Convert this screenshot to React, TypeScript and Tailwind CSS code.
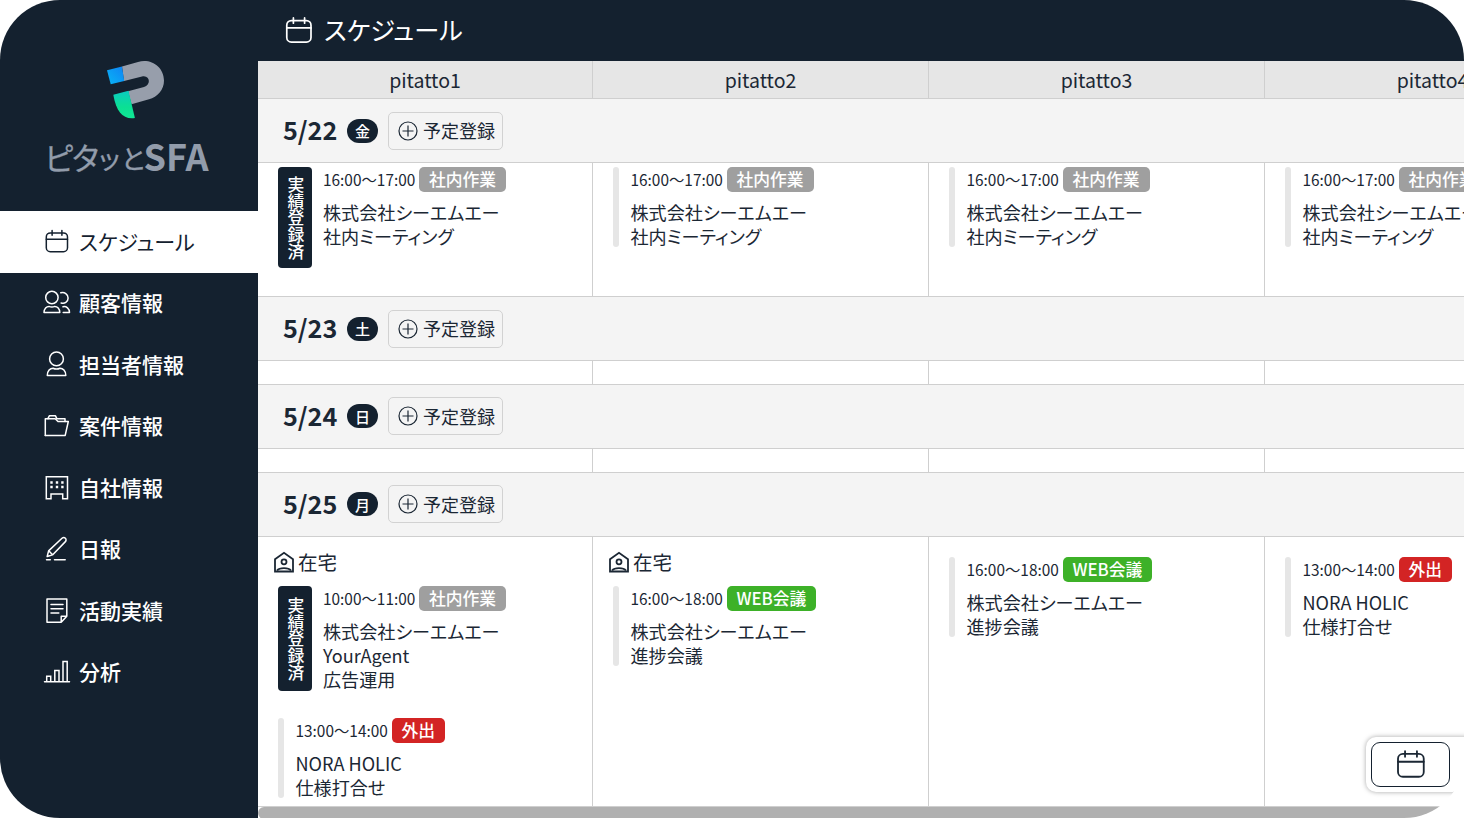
import type { ReactNode } from "react"

type Tone = "gray" | "green" | "red"

type ScheduleEvent = {
  time: string
  label: string
  tone: Tone
  lines: string[]
  done?: boolean
}

type Cell = { home?: boolean; offset?: boolean; events: ScheduleEvent[] }

type Day = { date: string; weekday: string; height: string; cells: Cell[] }

const TONES: Record<Tone, string> = {
  gray: "bg-[#9f9f9f]",
  green: "bg-[#3db128]",
  red: "bg-[#d32424]",
}

const MEMBERS = ["pitatto1", "pitatto2", "pitatto3", "pitatto4"]

const MEETING: ScheduleEvent = {
  time: "16:00〜17:00",
  label: "社内作業",
  tone: "gray",
  lines: ["株式会社シーエムエー", "社内ミーティング"],
}

const WEB_MEETING: ScheduleEvent = {
  time: "16:00〜18:00",
  label: "WEB会議",
  tone: "green",
  lines: ["株式会社シーエムエー", "進捗会議"],
}

const VISIT: ScheduleEvent = {
  time: "13:00〜14:00",
  label: "外出",
  tone: "red",
  lines: ["NORA HOLIC", "仕様打合せ"],
}

const EMPTY: Cell[] = [{ events: [] }, { events: [] }, { events: [] }, { events: [] }]

const DAYS: Day[] = [
  {
    date: "5/22",
    weekday: "金",
    height: "h-[134px]",
    cells: [
      { events: [{ ...MEETING, done: true }] },
      { events: [MEETING] },
      { events: [MEETING] },
      { events: [MEETING] },
    ],
  },
  { date: "5/23", weekday: "土", height: "h-[23.5px]", cells: EMPTY },
  { date: "5/24", weekday: "日", height: "h-6", cells: EMPTY },
  {
    date: "5/25",
    weekday: "月",
    height: "h-[270.5px]",
    cells: [
      {
        home: true,
        events: [
          {
            time: "10:00〜11:00",
            label: "社内作業",
            tone: "gray",
            lines: ["株式会社シーエムエー", "YourAgent", "広告運用"],
            done: true,
          },
          VISIT,
        ],
      },
      { home: true, events: [WEB_MEETING] },
      { offset: true, events: [WEB_MEETING] },
      { offset: true, events: [VISIT] },
    ],
  },
]

function Icon({ children, className = "size-7" }: { children: ReactNode; className?: string }) {
  return (
    <svg
      viewBox="0 0 28 28"
      fill="none"
      stroke="currentColor"
      strokeWidth="1.5"
      strokeLinecap="round"
      strokeLinejoin="round"
      className={`shrink-0 ${className}`}
    >
      {children}
    </svg>
  )
}

function CalendarIcon({ className }: { className?: string }) {
  return (
    <Icon className={className}>
      <rect x="3.3" y="4.9" width="21.2" height="18.800" rx="4" />
      <path d="M3.3 11.3h21.2M9.1 2.6v4.6M18.9 2.6v4.6" />
    </Icon>
  )
}

const NAV = [
  { label: "スケジュール", icon: <CalendarIcon /> },
  {
    label: "顧客情報",
    icon: (
      <Icon>
        <circle cx="8.9" cy="8.5" r="6.2" />
        <path d="M1 23.6c0-4 2.6-6.2 5-6.2 1.9.8 3.9.8 5.8 0 2.4 0 5 2.2 5 6.2z" />
        <path d="M17.8 3.8c3.6-1 7.300 1.200 7.300 5.200 0 4.100-3.600 6.200-7 5M20 17.700c3.300-.8 6.500 1.900 6.500 5.900h-6.300" />
      </Icon>
    ),
  },
  {
    label: "担当者情報",
    icon: (
      <Icon>
        <circle cx="13.5" cy="7.9" r="6.9" />
        <path d="M4.3 24.4c0-4.6 2.9-7.2 5.7-7.2 2.2 1 4.8 1 7 0 2.8 0 5.8 2.6 5.8 7.2z" />
      </Icon>
    ),
  },
  {
    label: "案件情報",
    icon: (
      <Icon>
        <path d="M2.3 23.4V6.8h2.5l1.5-3h6.2l1.5 3h8v2.7" />
        <path d="M2.3 23.4h19.9l3.1-13.9H15l-2.8-2.7H5" />
      </Icon>
    ),
  },
  {
    label: "自社情報",
    icon: (
      <Icon>
        <path d="M3.3 2.7h21.2v22h-4.8V20H8v4.7H3.3z" strokeLinejoin="miter" />
        <path
          d="M7.3 8.5h2.4M12.8 8.5h2.4M18.2 8.5h2.4M7.3 13h2.4M12.8 13h2.4M18.2 13h2.4"
          strokeWidth="2.3"
          strokeLinecap="butt"
        />
      </Icon>
    ),
  },
  {
    label: "日報",
    icon: (
      <Icon>
        <path d="M4.2 21.5l1.4-5.6L19 3.3c1-.9 2.5-.9 3.4 0s.9 2.4 0 3.3L9.5 19.9zM6 16l3.3 3.5" />
        <path d="M3.5 24.7h3.8M11.5 24.7h10.700" />
      </Icon>
    ),
  },
  {
    label: "活動実績",
    icon: (
      <Icon>
        <path d="M4 2h19.8v17.3l-5.6 6H4zM18.2 25.3v-6h5.6" />
        <path d="M8 7.5h12M8 11.7h12M8 16h7.8" />
      </Icon>
    ),
  },
  {
    label: "分析",
    icon: (
      <Icon>
        <path
          d="M1.5 23.8h25M3.7 23.8v-5.6h4v5.6M11.8 23.8V12.5h4.2v11.3M20 23.8V3.5h4.2v20.3"
          strokeLinejoin="miter"
        />
      </Icon>
    ),
  },
]

function Logo() {
  return (
    <svg viewBox="0 0 258 211" className="h-[211px] w-[258px] shrink-0">
      <defs>
        <linearGradient id="blue" x1="0" y1="1" x2="1" y2="0">
          <stop offset="0" stopColor="#08b5f4" />
          <stop offset="1" stopColor="#0f83f5" />
        </linearGradient>
        <linearGradient id="green" x1="0" y1="0" x2="0" y2="1">
          <stop offset="0" stopColor="#0bcbc0" />
          <stop offset="0.6" stopColor="#0be093" />
          <stop offset="1" stopColor="#10e795" />
        </linearGradient>
      </defs>
      <path
        d="M122 66.5L138 61.900C151 58 164 67 164 80.5C164 90 157.5 97 149 99.3L131.5 104.2L128 91.3L144 87C151.500 85 150 74.500 142 76.500L124 81z"
        fill="#979eab"
      />
      <path d="M107 70.3L122 66.6L124.2 80.9L110.7 84.3z" fill="url(#blue)" />
      <path d="M113.3 94.7L128.5 90.8L134.9 118C123 119.5 116.500 112.500 113.300 94.700z" fill="url(#green)" />
      <g fill="#929cab">
        <text x="44.5 72" y="170" fontSize="31" stroke="#929cab" strokeWidth="0.3">
          ピタ
        </text>
        <text x="99 121.5" y="169" fontSize="26" stroke="#929cab" strokeWidth="0.4">
          ッと
        </text>
        <text x="143.5" y="171" fontSize="37" fontWeight="700" textLength="65" lengthAdjust="spacingAndGlyphs">
          SFA
        </text>
      </g>
    </svg>
  )
}

function Sidebar() {
  return (
    <aside className="flex w-[258px] shrink-0 flex-col bg-[#14212f] text-white">
      <Logo />
      <nav className="flex flex-col">
        {NAV.map((item, i) => (
          <a
            key={item.label}
            className={`flex h-[61.5px] items-center gap-2 pl-[43px] text-[21px] leading-none ${
              i === 0 ? "bg-white text-[#14212f]" : "font-medium"
            }`}
          >
            {item.icon}
            <span className="pb-px">{item.label}</span>
          </a>
        ))}
      </nav>
    </aside>
  )
}

function EventCard({ event }: { event: ScheduleEvent }) {
  return (
    <div className={`flex ${event.done ? "gap-[11px]" : "gap-3"}`}>
      {event.done ? (
        <div className="flex w-[34px] items-center justify-center rounded bg-[#14212f] pl-px text-[16.8px] font-medium leading-none text-white [writing-mode:vertical-rl]">
          実績登録済
        </div>
      ) : (
        <div className="w-[5.5px] rounded-sm bg-[#e6e6e6]" />
      )}
      <div className={event.done ? (event.lines.length > 2 ? "h-[105px]" : "h-[101px]") : "h-[80px]"}>
        <div className="flex h-[25px] items-center gap-1">
          <span className="w-[92px] whitespace-nowrap text-[15.4px] leading-none">{event.time}</span>
          <span
            className={`flex h-[25px] items-center rounded-[5px] px-2.5 text-[16.8px] font-medium leading-none text-white ${TONES[event.tone]}`}
          >
            {event.label}
          </span>
        </div>
        <div className="mt-2 text-[18.1px] leading-6">
          {event.lines.map((line) => (
            <p key={line}>{line}</p>
          ))}
        </div>
      </div>
    </div>
  )
}

function HomeLabel() {
  return (
    <div className="-ml-[5px] flex h-[49.5px] items-center gap-[3px] pt-px text-[19.5px] leading-none">
      <svg viewBox="0 0 22 22" fill="none" stroke="currentColor" strokeWidth="1.8" className="size-[22px]">
        <path d="M2 20.5V8.3L11 1.8l9 6.5v12.2z" />
        <circle cx="11" cy="10.8" r="2.5" />
        <path d="M4 19.500c2.500-3.200 11.500-3.200 14 0" />
      </svg>
      <span>在宅</span>
    </div>
  )
}

function DayHeader({ day }: { day: Day }) {
  return (
    <div className="flex h-16 items-center border-b border-[#cfcfcf] bg-[#f4f4f4] pl-[25px]">
      <span className="w-[55px] pb-px text-[25.2px] font-bold leading-none">{day.date}</span>
      <span className="ml-[9px] flex h-6 w-[31px] items-center justify-center rounded-full bg-[#14212f] text-[15px] font-medium leading-none text-white">
        {day.weekday}
      </span>
      <button className="ml-[10px] flex h-[38px] w-[115px] items-center gap-[5px] rounded-[5px] border border-[#d2d2d2] pl-[9px] text-[18px] leading-none">
        <svg viewBox="0 0 20 20" fill="none" stroke="currentColor" strokeWidth="1.2" className="size-5 shrink-0">
          <circle cx="10" cy="10" r="9" />
          <path d="M10 4.5v11M4.5 10h11" />
        </svg>
        <span className="whitespace-nowrap pb-px">予定登録</span>
      </button>
    </div>
  )
}

export default function App() {
  return (
    <div className="h-[819px] w-[1464px] overflow-hidden bg-white font-['Noto_Sans_CJK_JP',sans-serif] text-[#1b2734] [font-feature-settings:'palt']">
      <div className="relative flex h-[818px] overflow-hidden rounded-[60px]">
        <Sidebar />

        <main className="flex min-w-0 flex-1 flex-col overflow-hidden">
          <header className="flex h-[61px] shrink-0 items-center gap-2.5 bg-[#14212f] pl-[25px] text-[25.2px] leading-none text-white">
            <CalendarIcon className="size-8" />
            <h1 className="-ml-px pb-0.5">スケジュール</h1>
          </header>

          <div className="flex h-[38px] w-[1343px] shrink-0 border-b border-[#cfcfcf] bg-[#e6e6e6]">
            {MEMBERS.map((name) => (
              <div
                key={name}
                className="flex w-[336px] items-center justify-center border-r border-[#cfcfcf] text-[19.5px] leading-none first:w-[335px]"
              >
                {name}
              </div>
            ))}
          </div>

          {DAYS.map((day) => (
            <section key={day.date} className="w-[1343px] shrink-0">
              <DayHeader day={day} />
              <div className={`flex border-b border-[#cfcfcf] ${day.height}`}>
                {day.cells.map((cell, i) => (
                  <div
                    key={MEMBERS[i]}
                    className="w-[336px] border-r border-[#cfcfcf] pl-5 first:w-[335px]"
                  >
                    {cell.home && <HomeLabel />}
                    <div
                      className={`flex flex-col gap-[27px] ${cell.home ? "" : cell.offset ? "pt-[20.5px]" : "pt-1"}`}
                    >
                      {cell.events.map((event) => (
                        <EventCard key={event.time} event={event} />
                      ))}
                    </div>
                  </div>
                ))}
              </div>
            </section>
          ))}

          <div className="h-3 shrink-0 rounded-l-full bg-[#b0b0b0]" />
        </main>

        {/* Floating calendar button */}
        <div className="absolute top-[737px] left-[1366px] h-[55px] w-[120px] rounded-[10px] bg-white p-[5px] shadow-[0_0_5px_rgba(0,0,0,0.35)]">
          <button className="flex h-[45px] w-[79px] items-center justify-center rounded-[9px] border border-[#14212f]">
            <CalendarIcon className="size-[34px]" />
          </button>
        </div>
      </div>
    </div>
  )
}
